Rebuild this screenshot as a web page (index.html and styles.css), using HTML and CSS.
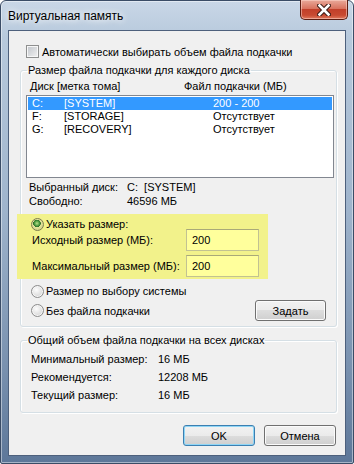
FILE: index.html
```html
<!DOCTYPE html>
<html lang="ru">
<head>
  <meta charset="UTF-8">
  <meta name="viewport" content="width=device-width, initial-scale=1.0">
  <title>Виртуальная память</title>
  <link rel="stylesheet" href="styles.css">
</head>
<body>

<div class="window">
  <div class="titlebar">
    <span class="title">Виртуальная память</span>
    <button class="close" aria-label="Закрыть">
      <svg width="14" height="12" viewBox="0 0 14 12">
        <path d="M2.5 1.5 L11.5 10.5 M11.5 1.5 L2.5 10.5" stroke="#3a1a14" stroke-width="4.6" stroke-linecap="square"/>
        <path d="M2.5 1.5 L11.5 10.5 M11.5 1.5 L2.5 10.5" stroke="#fff" stroke-width="2.6" stroke-linecap="square"/>
      </svg>
    </button>
  </div>

  <div class="client">
    <div class="check-row">
      <span class="checkbox"></span>
      <span>Автоматически выбирать объем файла подкачки</span>
    </div>

    <fieldset class="group group-disks">
      <legend>Размер файла подкачки для каждого диска</legend>
      <div class="cols">
        <span class="col-disk">Диск [метка тома]</span>
        <span>Файл подкачки (МБ)</span>
      </div>
      <div class="listbox">
        <div class="row selected">
          <span class="c-letter">C:</span><span class="c-label">[SYSTEM]</span><span>200 - 200</span>
        </div>
        <div class="row">
          <span class="c-letter">F:</span><span class="c-label">[STORAGE]</span><span>Отсутствует</span>
        </div>
        <div class="row">
          <span class="c-letter">G:</span><span class="c-label">[RECOVERY]</span><span>Отсутствует</span>
        </div>
      </div>

      <div class="info">
        <div class="info-row"><span class="info-key">Выбранный диск:</span><span>C:&nbsp;&nbsp;[SYSTEM]</span></div>
        <div class="info-row"><span class="info-key">Свободно:</span><span>46596 МБ</span></div>
      </div>

      <div class="highlight">
        <div class="radio-row">
          <span class="radio checked"></span>
          <span>Указать размер:</span>
        </div>
        <div class="field-row first">
          <span class="field-label">Исходный размер (МБ):</span>
          <span class="field">200</span>
        </div>
        <div class="field-row">
          <span class="field-label">Максимальный размер (МБ):</span>
          <span class="field">200</span>
        </div>
      </div>

      <div class="radio-row plain">
        <span class="radio"></span>
        <span>Размер по выбору системы</span>
      </div>
      <div class="last-row">
        <div class="radio-row plain">
          <span class="radio"></span>
          <span>Без файла подкачки</span>
        </div>
        <button class="btn btn-set">Задать</button>
      </div>
    </fieldset>

    <fieldset class="group group-total">
      <legend>Общий объем файла подкачки на всех дисках</legend>
      <div class="total-row"><span class="total-key">Минимальный размер:</span><span>16 МБ</span></div>
      <div class="total-row"><span class="total-key">Рекомендуется:</span><span>12208 МБ</span></div>
      <div class="total-row"><span class="total-key">Текущий размер:</span><span>16 МБ</span></div>
    </fieldset>

    <div class="actions">
      <button class="btn btn-default">OK</button>
      <button class="btn">Отмена</button>
    </div>
  </div>
</div>

</body>
</html>
```

FILE: styles.css
```css
body {
  margin: 0;
  font-family: "Liberation Sans", Arial, sans-serif;
  font-size: 11px;
  color: #000;
  background: #fff;
}
.window {
  position: relative;
  width: 354px;
  height: 464px;
  box-sizing: border-box;
  display: flex;
  flex-direction: column;
  padding: 0 7px 7px;
  border: 1px solid #3a4c66;
  border-radius: 6px 6px 2px 2px;
  background: linear-gradient(to bottom, #c9d7e7 0%, #b7c9dc 8%, #9fb4cc 45%, #7890ae 80%, #5d7799 100%);
  box-shadow: inset 0 0 0 1px rgba(255, 255, 255, 0.45);
}
.titlebar {
  height: 29px;
  display: flex;
  align-items: center;
}
.title {
  font-size: 12px;
  color: #000;
  text-shadow: 0 0 6px #fff, 0 0 10px rgba(255, 255, 255, 0.8);
}
.close {
  position: absolute;
  top: -1px;
  right: 5px;
  width: 48px;
  height: 20px;
  padding: 0;
  display: flex;
  align-items: center;
  justify-content: center;
  border: 1px solid #5b1d12;
  border-top: none;
  border-radius: 0 0 5px 5px;
  background: linear-gradient(to bottom, #e9a99a 0%, #d9735f 45%, #c2402a 50%, #c84a31 80%, #e07a5f 100%);
  box-shadow: inset 0 0 0 1px rgba(255, 220, 210, 0.5);
}
.client {
  flex: 1;
  display: flex;
  flex-direction: column;
  padding: 0 8px 0 11px;
  border: 1px solid #4d607c;
  background: #f0f0f0;
}
.check-row {
  display: flex;
  align-items: center;
  gap: 3px;
  height: 15px;
  margin-top: 13px;
  padding-left: 6px;
}
.checkbox {
  width: 13px;
  height: 13px;
  box-sizing: border-box;
  border: 1px solid #8e8f8f;
  background: linear-gradient(135deg, #c0c4ca, #f2f2f2);
  box-shadow: inset 0 0 0 1px #f7f7f7;
}
.group {
  margin: 5px 0 0;
  padding: 0 2px 5px 5px;
  min-width: 0;
  border: 1px solid #d5dfe5;
  border-radius: 3px;
  box-shadow: inset 1px 1px 0 #fff, 1px 1px 0 #fff;
}
.group legend {
  padding: 0 1px;
  margin-left: 1px;
  line-height: 13px;
}
.cols {
  display: flex;
  height: 13px;
  line-height: 13px;
  margin-top: 3px;
  padding-left: 4px;
}
.col-disk {
  width: 154px;
}
.listbox {
  height: 83px;
  box-sizing: border-box;
  margin-top: 2px;
  padding: 1px;
  border: 1px solid #828790;
  background: #fff;
}
.row {
  display: flex;
  height: 13px;
  line-height: 13px;
  padding-left: 4px;
}
.row.selected {
  background: #3399ff;
  color: #fff;
}
.c-letter {
  width: 32px;
}
.c-label {
  width: 149px;
}
.info {
  margin-top: 2px;
  padding-left: 3px;
}
.info-row {
  display: flex;
  height: 14px;
  line-height: 14px;
}
.info-key {
  width: 98px;
}
.highlight {
  width: 251px;
  margin: 6px 0 0 -9px;
  padding: 3px 0 2px;
  background: #f2f28b;
}
.radio-row {
  display: flex;
  align-items: center;
  gap: 2px;
  height: 14px;
  padding-left: 14px;
}
.radio-row.plain {
  padding-left: 5px;
}
.radio {
  width: 13px;
  height: 13px;
  box-sizing: border-box;
  border-radius: 50%;
  border: 1px solid #8c8c8c;
  background: radial-gradient(circle at 40% 35%, #fdfdfd 0%, #e6e6e6 45%, #c9c9c9 100%);
  box-shadow: inset 0 0 0 1px #f6f6f6;
}
.radio.checked {
  border-color: #7d7d4f;
  background: radial-gradient(circle at 45% 40%, #b9e08a 0%, #4a9a3e 28%, #2c6a2a 40%, #e4e49a 44%, #c4c47c 100%);
  box-shadow: none;
}
.field-row {
  display: flex;
  align-items: center;
  height: 22px;
  margin-top: 4px;
  padding-left: 15px;
}
.field-row.first {
  margin-top: -2px;
}
.field-label {
  width: 154px;
}
.field {
  width: 73px;
  height: 22px;
  box-sizing: border-box;
  padding-left: 5px;
  line-height: 20px;
  border: 1px solid #c2c292;
  border-top-color: #a9a978;
  background: #ffff9c;
}
.highlight + .radio-row {
  margin-top: 5px;
}
.last-row {
  display: flex;
  align-items: center;
  justify-content: space-between;
  height: 21px;
  margin-top: 2px;
}
.btn {
  width: 72px;
  height: 21px;
  padding: 0;
  font-family: "Liberation Sans", Arial, sans-serif;
  font-size: 11px;
  color: #000;
  border: 1px solid #707070;
  border-radius: 3px;
  background: linear-gradient(to bottom, #f2f2f2 0%, #ebebeb 50%, #dddddd 50%, #cfcfcf 100%);
  box-shadow: inset 0 0 0 1px #fbfbfb;
}
.btn-set {
  width: 71px;
  margin-right: 8px;
}
.btn-default {
  border-color: #3c7fb1;
  box-shadow: inset 0 0 0 1px #8fd6f6;
}
.group-total {
  margin-top: 7px;
  padding-bottom: 8px;
}
.total-row {
  display: flex;
  height: 18px;
  line-height: 18px;
  padding-left: 5px;
}
.total-row:first-of-type {
  margin-top: 3px;
}
.total-key {
  width: 127px;
}
.actions {
  display: flex;
  justify-content: flex-end;
  gap: 9px;
  margin: 12px 1px 0 0;
}
```
